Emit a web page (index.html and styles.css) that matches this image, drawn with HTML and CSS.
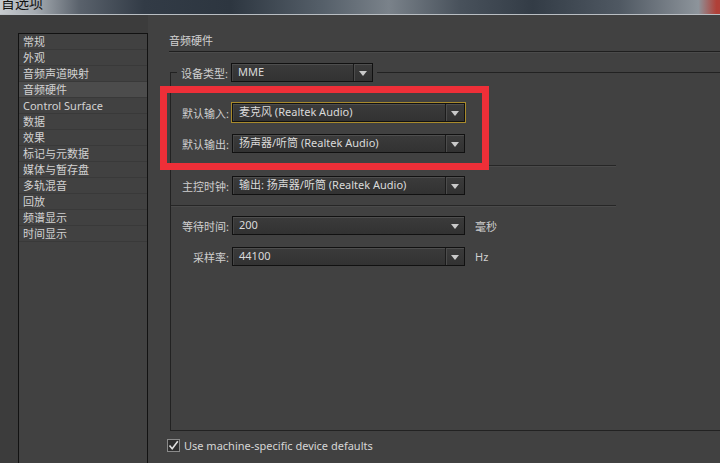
FILE: index.html
```html
<!DOCTYPE html>
<html lang="zh-CN">
<head>
    <meta charset="UTF-8">
    <title>首选项</title>
    <link rel="stylesheet" href="styles.css">
</head>
<body>
    <div class="titlebar">
        <span class="title">首选项</span>
    </div>

    <div class="window">
        <!-- Kategorien -->
        <div class="sidebar">
            <ul class="nav">
                <li>常规</li>
                <li>外观</li>
                <li>音频声道映射</li>
                <li class="active">音频硬件</li>
                <li>Control Surface</li>
                <li>数据</li>
                <li>效果</li>
                <li>标记与元数据</li>
                <li>媒体与暂存盘</li>
                <li>多轨混音</li>
                <li>回放</li>
                <li>频谱显示</li>
                <li>时间显示</li>
                <li class="filler"></li>
            </ul>
        </div>

        <!-- Einstellungen -->
        <div class="main">
            <div class="heading">音频硬件</div>

            <fieldset class="group">
                <legend>
                    <span class="label">设备类型:</span>
                    <div class="select short">
                        <span class="value">MME</span>
                        <span class="arrow"></span>
                    </div>
                </legend>

                <div class="row first">
                    <span class="label">默认输入:</span>
                    <div class="select focused">
                        <span class="value">麦克风 (Realtek Audio)</span>
                        <span class="arrow"></span>
                    </div>
                </div>
                <div class="row">
                    <span class="label">默认输出:</span>
                    <div class="select">
                        <span class="value">扬声器/听筒 (Realtek Audio)</span>
                        <span class="arrow"></span>
                    </div>
                </div>

                <div class="sep"></div>

                <div class="row">
                    <span class="label">主控时钟:</span>
                    <div class="select">
                        <span class="value">输出: 扬声器/听筒 (Realtek Audio)</span>
                        <span class="arrow"></span>
                    </div>
                </div>

                <div class="sep"></div>

                <div class="row">
                    <span class="label">等待时间:</span>
                    <div class="select">
                        <span class="value">200</span>
                        <span class="arrow plain"></span>
                    </div>
                    <span class="unit">毫秒</span>
                </div>
                <div class="row">
                    <span class="label">采样率:</span>
                    <div class="select">
                        <span class="value">44100</span>
                        <span class="arrow"></span>
                    </div>
                    <span class="unit">Hz</span>
                </div>
            </fieldset>

            <div class="check">
                <span class="box">
                    <svg width="11" height="11" viewBox="0 0 11 11">
                        <path d="M1.5 5.5 L4.2 8.8 L9.8 1.2" fill="none" stroke="#e0e0e0" stroke-width="1.6"/>
                    </svg>
                </span>
                <span>Use machine-specific device defaults</span>
            </div>
        </div>
    </div>

    <!-- roter Markierungsrahmen -->
    <div class="highlight"></div>
</body>
</html>
```

FILE: styles.css
```css
body {
    margin: 0;
    width: 720px;
    height: 463px;
    overflow: hidden;
    background-color: #414141;
    font-family: 'Noto Sans', 'Noto Sans CJK SC', sans-serif;
    font-size: 11px;
    color: #d2d2d2;
    position: relative;
}

.titlebar {
    height: 14px;
    border-bottom: 1px solid #b9bec3;
    background: linear-gradient(90deg, #c6cace 0%, #a4aab0 5%, #5a626c 11%, #323b46 20%, #2d3640 32%, #56606a 45%, #7a828a 54%, #48515b 64%, #333c46 74%, #4f5862 86%, #8d949b 97%, #b04038 99.5%);
    overflow: hidden;
}

.title {
    display: block;
    margin-top: -7px;
    padding-left: 1px;
    font-size: 14px;
    line-height: 20px;
    color: #111;
}

.window {
    display: flex;
    height: 448px;
}

.sidebar {
    flex: 0 0 146px;
    box-sizing: border-box;
    padding: 18px 0 0 18px;
    background-color: #3c3c3c;
    display: flex;
}

.nav {
    list-style: none;
    margin: 0;
    padding: 0;
    width: 128px;
    border: 1px solid #121212;
    border-bottom: none;
    background-color: #414141;
    display: flex;
    flex-direction: column;
}

.nav li {
    height: 16px;
    line-height: 15px;
    padding-left: 4px;
    border-bottom: 1px solid #393939;
    box-sizing: border-box;
    white-space: nowrap;
}

.nav li.active {
    background-color: #4c4c4c;
}

.nav li.filler {
    flex: 1;
    border-bottom: none;
}

.main {
    flex: 1;
    display: flex;
    flex-direction: column;
    padding-left: 21px;
    background-color: #414141;
}

.heading {
    margin-top: 18px;
    height: 18px;
    line-height: 16px;
    border-bottom: 1px solid #1f1f1f;
    box-shadow: 0 1px 0 #4b4b4b;
}

.group {
    flex: 1;
    margin: 11px -30px 0 1px;
    padding: 0 0 0 8px;
    min-inline-size: 0;
    border: 1px solid #222;
    border-right: none;
}

.group legend {
    display: flex;
    align-items: center;
    margin-left: -2px;
    padding: 0 4px;
}

.group legend .label {
    margin-right: 3px;
}

.label {
    color: #cfcfcf;
    white-space: nowrap;
}

.row {
    display: flex;
    align-items: center;
    margin-top: 12px;
}

.row.first {
    margin-top: 21px;
}

.row .label {
    width: 50px;
    margin-right: 3px;
    text-align: right;
}

.select {
    display: flex;
    width: 233px;
    height: 19px;
    box-sizing: border-box;
    border: 1px solid #111;
    background: linear-gradient(#3b3b3b, #323232);
    box-shadow: inset 0 1px 0 #4e4e4e, inset 1px 0 0 #454545;
    color: #dadada;
}

.select.short {
    width: 142px;
}

.select.focused {
    outline: 1px solid #a88a2c;
}

.select .value {
    flex: 1;
    padding-left: 6px;
    line-height: 16px;
    white-space: nowrap;
}

.select .arrow {
    width: 18px;
    border-left: 1px solid #1b1b1b;
    box-shadow: inset 1px 0 0 #4c4c4c;
    display: flex;
    align-items: center;
    justify-content: center;
}

.select .arrow.plain {
    border-left-color: transparent;
    box-shadow: none;
}

.select .arrow::after {
    content: "";
    border-left: 4px solid transparent;
    border-right: 4px solid transparent;
    border-top: 5px solid #c9c9c9;
    margin-top: 1px;
}

.unit {
    margin-left: 10px;
    color: #cfcfcf;
}

.sep {
    width: 445px;
    margin: 12px 0 0 -8px;
    height: 1px;
    background-color: #262626;
    box-shadow: 0 1px 0 #4a4a4a;
}

.sep + .row {
    margin-top: 10px;
}

.sep + .row + .sep {
    margin-top: 10px;
}

.check {
    display: flex;
    align-items: center;
    height: 14px;
    margin: 7px 0 11px -2px;
    color: #d6d6d6;
}

.check .box {
    width: 13px;
    height: 13px;
    box-sizing: border-box;
    border: 1px solid #8a8a8a;
    background-color: #2e2e2e;
    margin-right: 4px;
    display: flex;
    align-items: center;
    justify-content: center;
}

.highlight {
    position: absolute;
    left: 160px;
    top: 86px;
    width: 329px;
    height: 84px;
    box-sizing: border-box;
    border: 7px solid #ee2f38;
}
```
